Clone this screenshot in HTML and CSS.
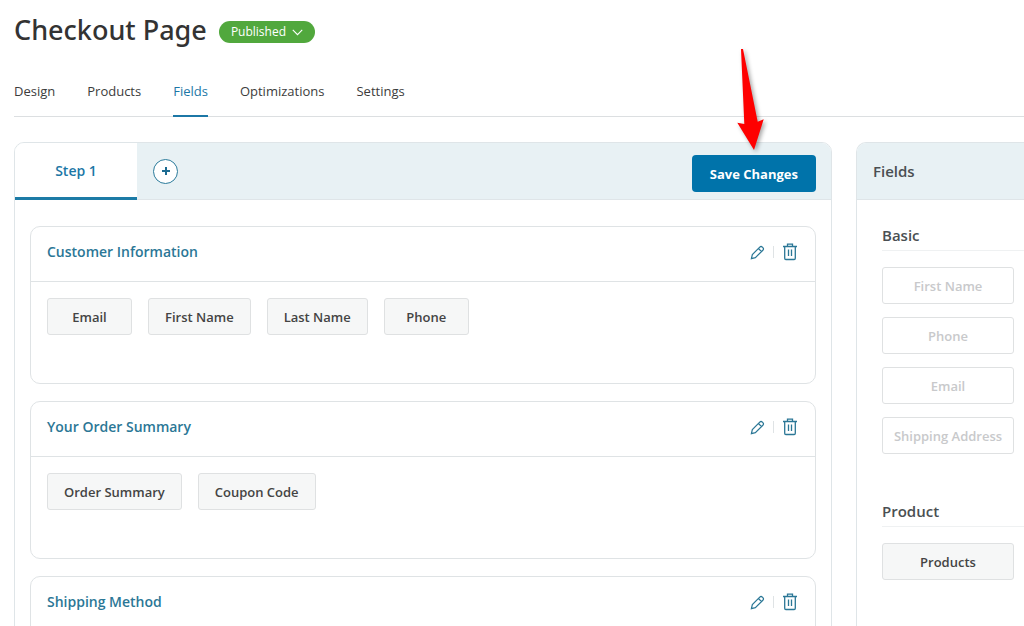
FILE: index.html
```html
<!DOCTYPE html>
<html lang="en">
<head>
  <meta charset="UTF-8">
  <meta name="viewport" content="width=device-width, initial-scale=1">
  <title>Checkout Page</title>
  <link rel="stylesheet" href="styles.css">
</head>
<body>
  <!-- Shared icons -->
  <svg class="sprite" aria-hidden="true">
    <symbol id="icon-edit" viewBox="0 0 16 16">
      <path d="M1.500 14.500l1-4.200 7.900-8a2 2 0 0 1 2.800 0l.5.5a2 2 0 0 1 0 2.800l-8 7.900z M9 3.700l3.300 3.300"/>
    </symbol>
    <symbol id="icon-trash" viewBox="0 0 16 18">
      <path d="M1 3.500h14 M5.500 3.200V1.200h5v2 M2.700 3.700v11.600a1.200 1.200 0 0 0 1.200 1.200h8.200a1.200 1.200 0 0 0 1.200-1.200V3.700 M6.500 6.500v6.500 M9.500 6.500v6.500"/>
    </symbol>
  </svg>

  <header class="page-header">
    <h1>Checkout Page</h1>
    <button class="status" type="button">Published
      <svg class="chevron" viewBox="0 0 10 6" aria-hidden="true"><path d="M.7.7L5 5 9.3.7"/></svg>
    </button>
  </header>

  <nav class="tabs">
    <a href="#design">Design</a>
    <a href="#products">Products</a>
    <a href="#fields" class="active">Fields</a>
    <a href="#optimizations">Optimizations</a>
    <a href="#settings">Settings</a>
  </nav>

  <main class="builder">
    <section class="panel steps">
      <div class="panel-head">
        <button class="step" type="button">Step 1</button>
        <button class="add-step" type="button" aria-label="Add step">
          <svg viewBox="0 0 10 10" aria-hidden="true"><path d="M5 1v8M1 5h8"/></svg>
        </button>
        <div class="save-wrap">
          <button class="save" type="button">Save Changes</button>
          <svg class="arrow" viewBox="0 0 40 110" aria-hidden="true"><path d="M11 4h2L27.700 76.700 33.700 74.300 24 105 7.300 77.700 14.300 79z"/></svg>
        </div>
      </div>

      <div class="cards">
        <article class="card">
          <div class="card-head">
            <h2>Customer Information</h2>
            <div class="actions">
              <button type="button" aria-label="Edit"><svg class="edit"><use href="#icon-edit"/></svg></button>
              <span class="sep"></span>
              <button type="button" aria-label="Delete"><svg class="trash"><use href="#icon-trash"/></svg></button>
            </div>
          </div>
          <div class="chips">
            <button class="chip" type="button">Email</button>
            <button class="chip" type="button">First Name</button>
            <button class="chip" type="button">Last Name</button>
            <button class="chip" type="button">Phone</button>
          </div>
        </article>

        <article class="card">
          <div class="card-head">
            <h2>Your Order Summary</h2>
            <div class="actions">
              <button type="button" aria-label="Edit"><svg class="edit"><use href="#icon-edit"/></svg></button>
              <span class="sep"></span>
              <button type="button" aria-label="Delete"><svg class="trash"><use href="#icon-trash"/></svg></button>
            </div>
          </div>
          <div class="chips">
            <button class="chip" type="button">Order Summary</button>
            <button class="chip" type="button">Coupon Code</button>
          </div>
        </article>

        <article class="card">
          <div class="card-head">
            <h2>Shipping Method</h2>
            <div class="actions">
              <button type="button" aria-label="Edit"><svg class="edit"><use href="#icon-edit"/></svg></button>
              <span class="sep"></span>
              <button type="button" aria-label="Delete"><svg class="trash"><use href="#icon-trash"/></svg></button>
            </div>
          </div>
          <div class="chips"></div>
        </article>
      </div>
    </section>

    <aside class="panel library">
      <div class="panel-head"><h2>Fields</h2></div>
      <div class="group">
        <h3>Basic</h3>
        <div class="group-list">
          <button class="chip" type="button" disabled>First Name</button>
          <button class="chip" type="button" disabled>Phone</button>
          <button class="chip" type="button" disabled>Email</button>
          <button class="chip" type="button" disabled>Shipping Address</button>
        </div>
      </div>
      <div class="group">
        <h3>Product</h3>
        <div class="group-list">
          <button class="chip" type="button">Products</button>
        </div>
      </div>
    </aside>
  </main>
</body>
</html>
```
FILE: styles.css
```css
/* Reset & base */
* { box-sizing: border-box; margin: 0; padding: 0; }
body { font-family: 'Segoe UI', 'Open Sans', sans-serif; font-size: 14px; line-height: 20px; background: #fff; color: #3c3c3c; height: 100vh; padding-left: 14px; overflow: hidden; }
button { font: inherit; color: inherit; background: none; border: none; cursor: pointer; }
svg { display: block; fill: none; stroke: currentColor; }
.sprite { display: none; }

/* Title */
.page-header { display: flex; align-items: center; gap: 12px; padding-top: 10px; }
h1 { font-family: 'Segoe UI', 'Noto Sans', sans-serif; font-size: 27px; line-height: 40px; font-weight: 500; color: #333; }
.status { display: flex; align-items: center; gap: 6px; height: 22px; margin-top: 4px; padding: 0 12px; border-radius: 11px; background: #51a83d; color: #fff; font-size: 12px; }
.chevron { width: 11px; height: 7px; }

/* Tabs */
.tabs { display: flex; gap: 32px; margin-top: 22px; border-bottom: 1px solid #dcdfe1; }
.tabs a { height: 45px; padding-top: 9px; margin-bottom: -1px; font-size: 13px; color: #3c3c3c; text-decoration: none; }
.tabs a.active { color: #1c77a6; border-bottom: 2px solid #1c77a6; }

/* Panels */
.builder { display: flex; align-items: flex-start; gap: 24px; margin-top: 25px; }
.panel { border: 1px solid #dfe5e8; border-radius: 10px; }
.panel-head { display: flex; align-items: center; height: 57px; background: #e8f1f4; border-bottom: 1px solid #dfe5e8; border-radius: 9px 9px 0 0; }
.steps { flex: 1; min-height: 600px; }

/* Step bar */
.step { width: 122px; height: 57px; padding-top: 3px; background: #fff; border-bottom: 3px solid #1c7ba6; border-radius: 9px 0 0 0; color: #1c77a6; font-weight: 600; }
.add-step { display: grid; place-items: center; width: 25px; height: 25px; margin-left: 16px; background: #fff; border: 1px solid #2a7b9b; border-radius: 50%; color: #1c6b91; }
.add-step svg { width: 10px; height: 10px; stroke-width: 2; }
.save-wrap { position: relative; margin-left: auto; margin-right: 15px; padding-top: 5px; }
.save { display: block; height: 37px; padding: 0 18px; border-radius: 4px; background: #0073aa; color: #fff; font-size: 13px; font-weight: 700; }
.arrow { position: absolute; right: 46px; bottom: 37px; width: 40px; height: 110px; fill: #fe0000; stroke: none; filter: drop-shadow(2px 2px 2px rgba(0, 0, 0, 0.35)); }

/* Section cards */
.cards { display: grid; gap: 17px; padding: 26px 15px; }
.card { min-height: 158px; border: 1px solid #dfe3e5; border-radius: 10px; }
.card-head { display: flex; align-items: center; justify-content: space-between; height: 55px; padding: 0 17px 4px 16px; border-bottom: 1px solid #dfe3e5; }
.card-head h2 { font-size: 14px; font-weight: 600; color: #2b7796; }
.actions { display: flex; align-items: center; gap: 8px; color: #2b7796; }
.edit { width: 15px; height: 15px; stroke-width: 1.3; }
.trash { width: 16px; height: 18px; stroke-width: 1.3; }
.sep { width: 1px; height: 12px; background: #dfe3e5; }
.chips { display: flex; flex-wrap: wrap; gap: 16px; padding: 16px; }

/* Field chips */
.chip { height: 37px; min-width: 85px; padding: 0 16px; background: #f6f7f7; border: 1px solid #dfe1e2; border-radius: 3px; color: #444; font-size: 13px; font-weight: 600; white-space: nowrap; }
.chip:disabled { background: #fff; color: #c8c9cb; cursor: default; }

/* Field library */
.library { flex: 0 0 168px; min-height: 600px; border-right: none; border-radius: 10px 0 0 0; }
.library .panel-head { padding-left: 16px; border-radius: 9px 0 0 0; }
.library h2 { font-size: 15px; font-weight: 600; color: #4a4f52; }
.group { padding: 25px 0 31px 25px; }
.group + .group { padding-top: 16px; }
.group h3 { padding-bottom: 5px; border-bottom: 1px solid #eff1f2; font-size: 15px; font-weight: 600; color: #4a4f52; }
.group-list { display: grid; gap: 13px; padding: 16px 10px 0 0; }
.group-list .chip { padding: 0; }
```
